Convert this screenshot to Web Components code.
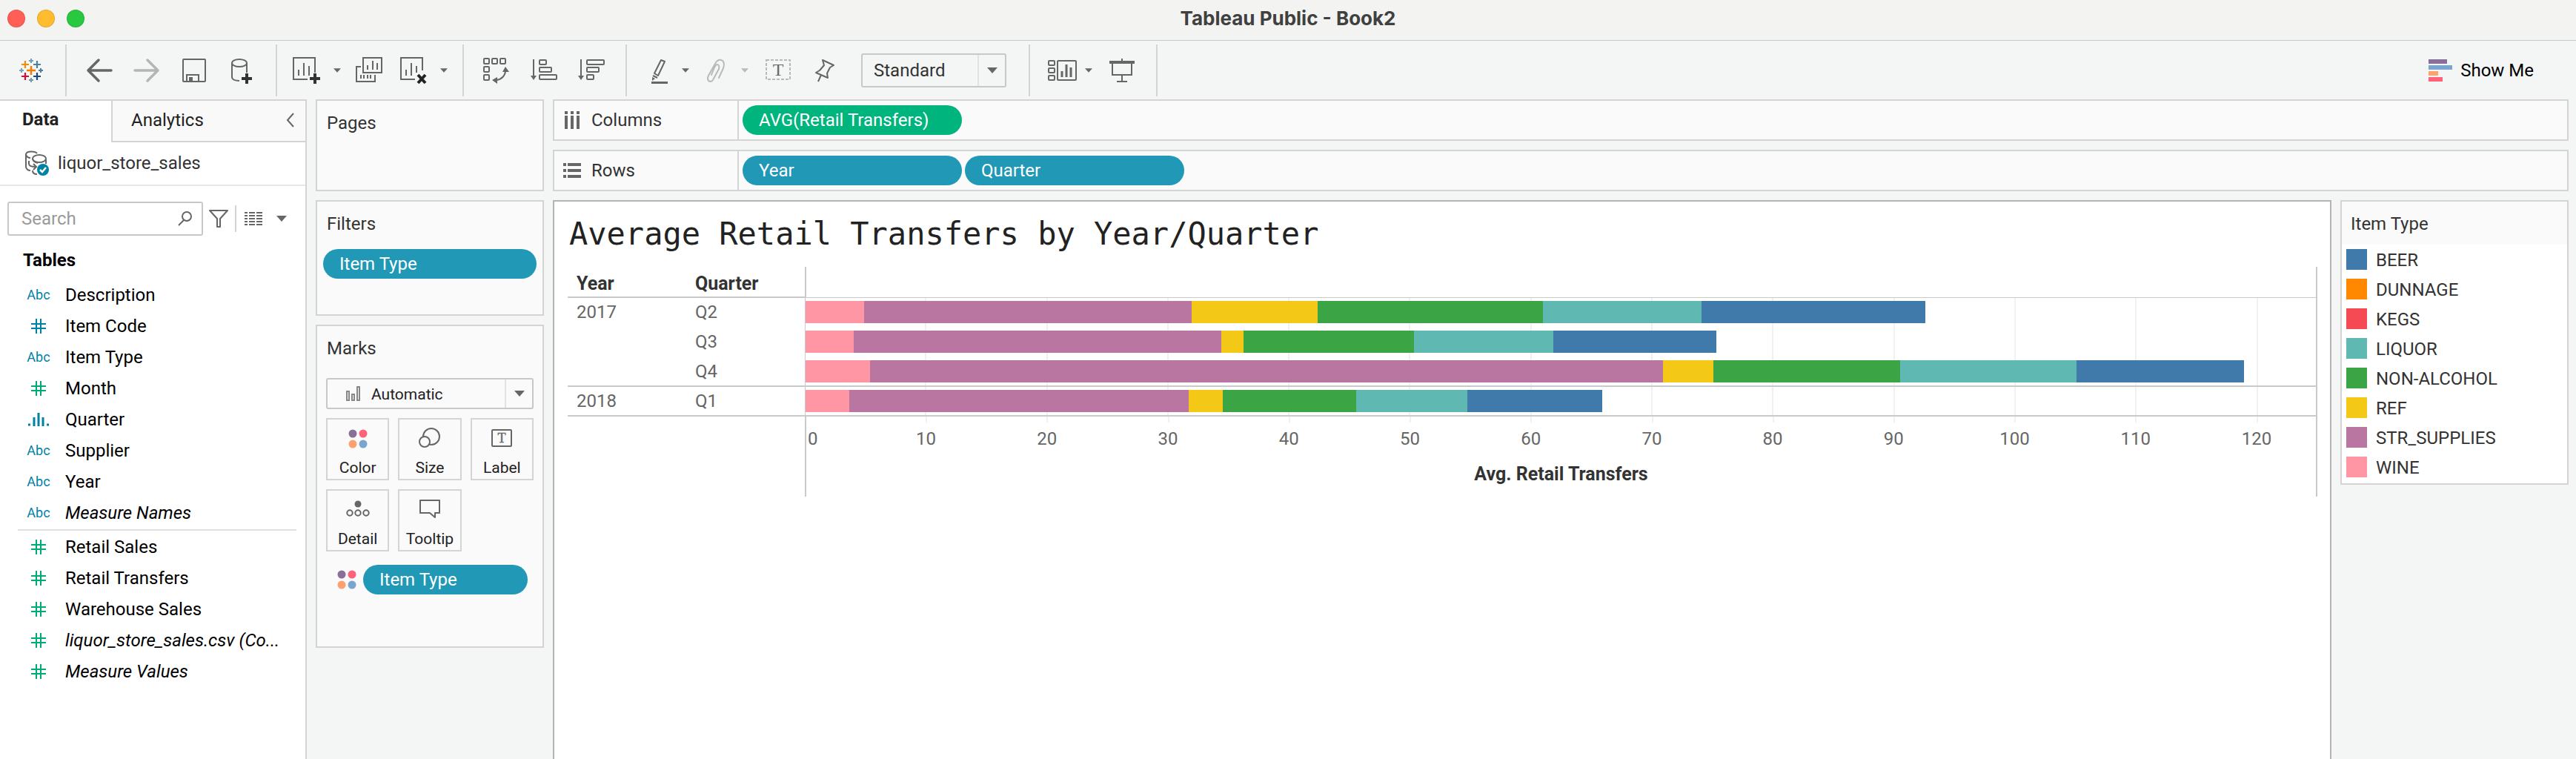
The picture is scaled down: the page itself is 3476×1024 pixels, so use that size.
<!DOCTYPE html>
<html lang="en">
<head>
<meta charset="utf-8">
<title>Tableau Public - Book2</title>
<style>
  html, body { height: 100%; }
  body { margin: 0; background: #f4f5f5; color: #333; font: 24px/40px Roboto, "Liberation Sans", sans-serif; }
</style>
</head>
<body>
<book-window>
  <title-bar slot="title">Tableau Public - Book2</title-bar>
  <tool-bar slot="toolbar"></tool-bar>
  <data-pane slot="data"></data-pane>

  <shelf-card slot="cards" heading="Pages" style="--min: 124px"></shelf-card>
  <shelf-card slot="cards" heading="Filters" style="--min: 156px">
    <field-pill style="margin: 13px 8px 0">Item Type</field-pill>
  </shelf-card>
  <shelf-card slot="cards" heading="Marks" style="--min: 436px">
    <marks-editor><field-pill>Item Type</field-pill></marks-editor>
  </shelf-card>

  <view-shelf slot="shelves" heading="Columns" icon="columns">
    <field-pill tone="green">AVG(Retail Transfers)</field-pill>
  </view-shelf>
  <view-shelf slot="shelves" heading="Rows" icon="rows">
    <field-pill>Year</field-pill>
    <field-pill>Quarter</field-pill>
  </view-shelf>

  <bar-view slot="view" heading="Average Retail Transfers by Year/Quarter"></bar-view>
  <color-legend slot="legend" heading="Item Type"></color-legend>
</book-window>

<script>
const BASE = `:host, *, *::before, *::after { box-sizing: border-box; }
  button, select, input { font: inherit; color: inherit; background: none; border: 0; margin: 0; padding: 0; border-radius: 0; }
  svg { display: block; fill: none; stroke: #666; stroke-width: 2; flex: none; }
  h1, h2 { margin: 0; font-size: inherit; font-weight: 400; }
  ul { list-style: none; margin: 0; padding: 0; }`;

const define = (name, css, html) => customElements.define(name, class extends HTMLElement {
  connectedCallback() {
    if (this.shadowRoot) return;
    this.attachShadow({ mode: "open" }).innerHTML =
      `<style>${BASE}${css}</style>${typeof html === "function" ? html(this) : html}`;
  }
});

const plus = (x, y, r, c, w) => `<path stroke="${c}" stroke-width="${w}" d="M${x - r} ${y}h${2 * r}M${x} ${y - r}v${2 * r}"/>`;
const caret = (w, c = "#666") => `<svg width="${w}" height="${w / 2 + 1}" viewBox="0 0 14 8" style="fill:${c};stroke:none"><path d="M0 0h14l-7 8z"/></svg>`;
const dots = `<svg width="26" height="26" viewBox="0 0 26 26" style="stroke:none"><circle cx="6" cy="6" r="5.500" fill="#8a6f98"/><circle cx="20" cy="6" r="5.500" fill="#ff637b"/><circle cx="6" cy="20" r="5.500" fill="#ffa06f"/><circle cx="20" cy="20" r="5.500" fill="#7aa5cf"/></svg>`;

const ICONS = {
  logo: plus(20, 20, 6, "#f57c00", 2.4) + plus(12, 12, 5, "#ee8d0a", 2.2) + plus(28, 12, 5, "#4f7f9c", 2.2)
      + plus(12, 28, 5, "#d0103a", 2.2) + plus(28, 28, 5, "#1b4a87", 2.2) + plus(20, 7, 3, "#6ba3b8", 2)
      + plus(7, 20, 3, "#7f9fb8", 2) + plus(33, 20, 3, "#4f7f9c", 2) + plus(20, 33, 3, "#7199ae", 2),
  back: `<path stroke-width="3.500" stroke-linecap="round" stroke-linejoin="round" d="M19 6L5 20L19 34M5 20H36"/>`,
  forward: `<path stroke="#b5b5b5" stroke-width="3.500" stroke-linecap="round" stroke-linejoin="round" d="M21 6L35 20L21 34M35 20H4"/>`,
  save: `<rect x="5" y="5" width="30" height="30" rx="1"/><path d="M10 35V26H26V35"/><path fill="#666" stroke="none" d="M13 29h5v6h-5z"/>`,
  datasource: `<ellipse cx="17" cy="10" rx="10" ry="5"/><path d="M7 10V29C7 32 11 34 17 34M27 10V23"/>` + plus(27, 31, 7, "#333", 4),
  sheet: `<path d="M31 23V3H2V32H21M9 19V27M16 10V27M23 14V27"/>` + plus(31, 31, 7, "#333", 4),
  duplicate: `<path d="M12 3H37V23H12ZM18 13V19M25 7V19M31 10V19M9 15H3V35H28V26M9 26V31M13 26V31M18 26V31M22 26V31"/>`,
  clear: `<path d="M32 20V3H3V32H22M10 19V27M17 10V27M24 14V23"/><path stroke="#222" stroke-width="4" d="M26 26L36 37M36 26L26 37"/>`,
  swap: `<g><rect x="3" y="4" width="7" height="7" rx="1"/><rect x="14" y="4" width="7" height="7" rx="1"/><rect x="25" y="4" width="7" height="7" rx="1"/><rect x="3" y="15" width="7" height="7" rx="1"/><rect x="3" y="26" width="7" height="7" rx="1"/></g><path d="M32 20C32 27 27 32 20 33"/><path fill="#666" stroke="none" d="M28 22h9l-5-7zM21 29v9l-7-5z"/>`,
  ascending: `<path d="M6 5V30"/><path fill="#666" stroke="none" d="M2 27h8l-4 6z"/><rect x="14" y="6" width="9" height="6" rx="1"/><rect x="14" y="16" width="16" height="6" rx="1"/><rect x="14" y="26" width="23" height="6" rx="1"/>`,
  descending: `<path d="M6 5V30"/><path fill="#666" stroke="none" d="M2 27h8l-4 6z"/><rect x="14" y="6" width="23" height="6" rx="1"/><rect x="14" y="16" width="16" height="6" rx="1"/><rect x="14" y="26" width="9" height="6" rx="1"/>`,
  highlight: `<path stroke-linejoin="round" d="M22 6L27 8L18 27L13 24ZM11 27L17 30"/><path fill="#666" stroke="none" d="M10 29L14 31L10 34zM9 35h22v3H9z"/>`,
  clip: `<path stroke="#b9b9b9" stroke-linecap="round" d="M24 30L30 17C32 12 31 7 27 6C23 5 21 7 19 11L10 27C8 31 9 34 12 35C15 35 16 34 17 31L24 18C25 15 24 12 22 12C20 12 19 14 18 16L14 26"/>`,
  label: `<rect x="4" y="6" width="32" height="26" stroke="#b9b9b9" stroke-dasharray="4 2"/><text x="20" y="27" text-anchor="middle" font-family="Liberation Serif, serif" font-size="24" fill="#666" stroke="none">T</text>`,
  pin: `<path stroke-linejoin="round" d="M16 6L31 13L26 16L22 24L23 30L7 23L12 20L18 13ZM14 26L10 35"/>`,
  cards: `<rect x="1" y="7" width="8" height="6" rx="1"/><rect x="1" y="17" width="8" height="6" rx="1"/><rect x="1" y="27" width="8" height="6" rx="1"/><rect x="13" y="7" width="25" height="26" rx="1"/><path stroke-width="3" d="M19 21V29M25 12V29M31 16V29"/>`,
  present: `<path stroke-width="4" d="M3 9H37"/><path d="M20 4V8M7 10V26H33V10M20 26V34M13 35H27"/>`
};
const icon = name => `<svg width="40" height="40" viewBox="0 0 40 40">${ICONS[name]}</svg>`;

define("book-window", `
  :host { display: flex; flex-direction: column; height: 100%; min-height: 100vh; overflow: hidden; }
  main { flex: 1; display: grid; grid-template-columns: 414px 308px 1fr; gap: 12px; padding-right: 10px; min-height: 0; }
  .stack { display: flex; flex-direction: column; gap: 12px; min-width: 0; }
  .work { flex: 1; display: grid; grid-template-columns: 1fr 308px; gap: 12px; align-items: start; }
  ::slotted([slot=view]) { height: 100%; }
  ::slotted([slot=data]) { min-height: 0; }
`, `<slot name="title"></slot><slot name="toolbar"></slot>
  <main><slot name="data"></slot><div class="stack"><slot name="cards"></slot></div>
  <div class="stack"><slot name="shelves"></slot><div class="work"><slot name="view"></slot><slot name="legend"></slot></div></div></main>`);

define("title-bar", `
  :host { display: grid; grid-template-columns: 1fr auto 1fr; align-items: center; height: 55px; padding: 0 10px 4px; background: #f3f3f1; border-bottom: 1px solid #c9c9c9; }
  .lights { display: flex; gap: 16px; }
  button { width: 24px; height: 24px; border-radius: 50%; border: 1px solid rgba(0,0,0,.1); }
  h1 { font: 700 26px/40px Inter, sans-serif; color: #404040; }
`, `<div class="lights"><button aria-label="Close" style="background:#ff5f57"></button><button aria-label="Minimize" style="background:#febc2e"></button><button aria-label="Zoom" style="background:#28c840"></button></div><h1><slot></slot></h1>`);

const tool = (name, label, gap = 24) => `<button aria-label="${label}" class="g${gap}">${icon(name)}</button>`;
const menu = (label, gap, c) => `<button aria-label="${label}" class="menu g${gap}">${caret(10, c)}</button>`;
define("tool-bar", `
  :host { display: flex; align-items: center; height: 79px; }
  .group { display: flex; align-items: center; height: 70px; border-right: 2px solid #d4d4d4; padding-right: 26px; }
  .brand { padding: 0 26px 0 22px; }
  .tight { padding-right: 14px; }
  .menu { width: 22px; height: 40px; display: grid; place-items: center; }
  .g4 { margin-left: 4px; } .g8 { margin-left: 8px; } .g10 { margin-left: 10px; } .g12 { margin-left: 12px; } .g14 { margin-left: 14px; }
  .g20 { margin-left: 20px; } .g24 { margin-left: 24px; }
  .select { display: grid; grid-template-columns: 155px 37px; height: 46px; align-items: center; border: 2px solid #c8c8c8; border-radius: 3px; margin: 0 4px 0 28px; width: 196px; }
  .select select { grid-area: 1/1/2/3; height: 42px; padding-left: 15px; appearance: none; width: 100%; }
  .select span { grid-area: 1/2; height: 42px; display: grid; place-items: center; border-left: 2px solid #e2e2e2; pointer-events: none; }
  .show { margin-left: auto; margin-right: 57px; display: flex; align-items: center; gap: 11px; color: #000; }
`, `
  <div class="group brand">${icon("logo")}</div>
  <div class="group">${tool("back", "Undo")}${tool("forward", "Redo")}${tool("save", "Save")}${tool("datasource", "New data source")}</div>
  <div class="group tight">${tool("sheet", "New worksheet", 20)}${menu("New worksheet menu", 10)}${tool("duplicate", "Duplicate", 12)}${tool("clear", "Clear sheet", 20)}${menu("Clear menu", 10)}</div>
  <div class="group">${tool("swap", "Swap rows and columns")}${tool("ascending", "Sort ascending")}${tool("descending", "Sort descending")}</div>
  <div class="group">${tool("highlight", "Highlight")}${menu("Highlight menu", 4)}${tool("clip", "Group members", 10)}${menu("Group menu", 8, "#b9b9b9")}${tool("label", "Show mark labels", 14)}${tool("pin", "Fix axes")}
    <div class="select"><select aria-label="Fit"><option>Standard</option></select><span>${caret(14)}</span></div></div>
  <div class="group">${tool("cards", "Show or hide cards")}${menu("Cards menu", 4)}${tool("present", "Presentation mode", 14)}</div>
  <button class="show"><svg width="32" height="30" viewBox="0 0 32 30" style="stroke:none"><path fill="#8a6f98" d="M0 0h25v6H0z"/><path fill="#7aa5cf" d="M0 8h32v6H0z"/><path fill="#ffa06f" d="M0 16h13v6H0z"/><path fill="#ff637b" d="M0 24h19v6H0z"/></svg>Show Me</button>`);

const FIELDS = {
  dimensions: [["abc", "Description"], ["num", "Item Code"], ["abc", "Item Type"], ["num measure", "Month"], ["bin", "Quarter"], ["abc", "Supplier"], ["abc", "Year"], ["abc", "Measure Names", 1]],
  measures: [["num measure", "Retail Sales"], ["num measure", "Retail Transfers"], ["num measure", "Warehouse Sales"], ["num measure", "liquor_store_sales.csv (Co...", 1], ["num measure", "Measure Values", 1]]
};
const fieldIcon = kind => kind === "abc" ? "Abc"
  : kind === "bin" ? `<svg width="28" height="20" viewBox="0 0 28 20"><path stroke="#0081a6" stroke-width="3" d="M0 17h3M25 17h3M8 7V19M14 1V19M20 7V19"/></svg>`
  : `<svg width="20" height="20" viewBox="0 0 20 20" style="stroke:${kind.includes("measure") ? "#00ab78" : "#0081a6"}"><path d="M7 0V20M13 0V20M0 7H20M0 13H20"/></svg>`;
const fieldList = list => `<ul>${list.map(([k, t, i]) => `<li><span class="type">${fieldIcon(k)}</span><span${i ? ' class="italic"' : ""}>${t}</span></li>`).join("")}</ul>`;

define("data-pane", `
  :host { display: block; background: #fff; border-top: 2px solid #d4d4d4; border-right: 2px solid #d4d4d4; color: #000; }
  .tabs { display: grid; grid-template-columns: 150px 1fr; height: 56px; line-height: 50px; color: #222; }
  .tabs button { text-align: left; }
  .data { font-weight: 700; padding: 0 0 6px 30px; }
  .other { display: flex; align-items: center; background: #f9f9f9; border: solid #d4d4d4; border-width: 0 0 2px 2px; padding: 0 14px 2px 25px; justify-content: space-between; }
  .source { display: flex; align-items: center; gap: 12px; height: 59px; padding: 0 0 2px 32px; border-bottom: 2px solid #e6e6e6; color: #333; }
  .find { display: flex; align-items: center; margin: 21px 0 14px 10px; height: 46px; }
  .search { display: flex; align-items: center; width: 264px; height: 46px; border: 2px solid #c8c8c8; border-radius: 3px; padding: 0 12px 0 17px; margin-right: 8px; }
  .search input { flex: 1; min-width: 0; outline: 0; }
  .search input::placeholder { color: #9a9a9a; opacity: 1; }
  .list { border-left: 2px solid #d4d4d4; height: 36px; padding-left: 11px; margin-left: 9px; display: flex; align-items: center; }
  .more { margin-left: 19px; }
  h2 { font-weight: 700; line-height: 38px; padding-left: 31px; margin-bottom: 7px; }
  li { display: flex; align-items: center; height: 42px; white-space: nowrap; }
  .type { width: 32px; margin: 0 20px 0 36px; display: flex; justify-content: center; color: #0081a6; font-size: 18px; }
  .italic { font-style: italic; }
  hr { border: 0; height: 2px; background: #e0e0e0; margin: 1px 12px 1px 24px; }
`, `
  <div class="tabs"><button class="data">Data</button><button class="other">Analytics<svg width="12" height="20" viewBox="0 0 12 20"><path d="M10 1L2 10L10 19"/></svg></button></div>
  <div class="source"><svg width="34" height="34" viewBox="0 0 34 34"><path d="M18 4C16 1 4 0 3 5V22C3 25 6 27 9 27M3 5C3 8 6 10 9 10"/><ellipse cx="21" cy="11" rx="9" ry="5"/><path d="M12 11C12 14 15 16 19 17M30 12V18M7 14V18C7 21 10 22 16 22M13 18L17 22L13 26M12 27C12 30 14 32 18 32"/><circle cx="26" cy="26" r="8" fill="#0081a6" stroke="none"/><path stroke="#fff" stroke-width="2.500" d="M22 26L25 29L30 23"/></svg>liquor_store_sales</div>
  <div class="find">
    <label class="search"><input type="text" placeholder="Search" aria-label="Search"><svg width="20" height="20" viewBox="0 0 20 20"><circle cx="12" cy="7" r="6"/><path d="M8 12L1 19"/></svg></label>
    <button aria-label="Filter fields"><svg width="26" height="26" viewBox="0 0 26 26"><path stroke-linejoin="round" d="M1 2H25L15 13V24H11V13Z"/></svg></button>
    <div class="list"><button aria-label="View as list"><svg width="24" height="20" viewBox="0 0 24 20"><path d="M0 2H4M6 2H14M16 2H24M0 6H4M6 6H14M16 6H24M0 10H4M6 10H14M16 10H24M0 14H4M6 14H14M16 14H24M0 18H4M6 18H14M16 18H24"/></svg></button></div>
    <button class="more" aria-label="More options">${caret(14)}</button>
  </div>
  <h2>Tables</h2>${fieldList(FIELDS.dimensions)}<hr>${fieldList(FIELDS.measures)}`);

define("shelf-card", `
  :host { display: block; min-height: var(--min); border: 2px solid #d4d4d4; background: #fafafa; }
  h2 { padding: 9px 0 0 13px; line-height: 42px; }
`, el => `<h2>${el.getAttribute("heading")}</h2><slot></slot>`);

define("field-pill", `
  :host { display: block; height: 40px; border-radius: 20px; background: #2098b6; color: #fff; padding: 0 22px; white-space: nowrap; }
  :host([tone=green]) { background: #00b47d; }
`, `<slot></slot>`);

const markIcon = body => `<svg width="34" height="32" viewBox="0 0 34 32">${body}</svg>`;
define("marks-editor", `
  :host { display: block; margin: 19px 12px 0; font-size: 21px; color: #222; }
  .select { display: grid; grid-template-columns: 25px 1fr 37px; padding-left: 24px; height: 42px; align-items: center; border: 2px solid #c8c8c8; border-radius: 3px; }
  .select select { grid-area: 1/1/2/4; height: 38px; padding-left: 35px; appearance: none; width: 100%; }
  .select svg { pointer-events: none; }
  .kind { grid-area: 1/1; }
  .select span { grid-area: 1/3; height: 38px; display: grid; place-items: center; border-left: 2px solid #e2e2e2; pointer-events: none; }
  .grid { display: grid; grid-template-columns: repeat(3, 1fr); gap: 12px; margin: 12px 0 18px; }
  .grid button { height: 84px; border: 2px solid #d4d4d4; display: flex; flex-direction: column; align-items: center; padding-top: 10px; gap: 11px; line-height: 24px; }
  .row { display: flex; align-items: center; gap: 9px; padding: 0 8px 0 15px; font-size: 24px; }
  ::slotted(*) { flex: 1; }
`, `
  <div class="select"><svg class="kind" width="20" height="20" viewBox="0 0 20 20" style="stroke:#888"><rect x="2" y="7" width="3" height="12"/><rect x="9" y="11" width="3" height="8"/><rect x="16" y="1" width="3" height="18"/></svg>
    <select aria-label="Mark type"><option>Automatic</option></select><span>${caret(14)}</span></div>
  <div class="grid">
    <button><svg width="26" height="32" viewBox="0 -3 26 32">${dots.replace(/<\/?svg[^>]*>/g, "").replace(/<circle/g, '<circle stroke="none"')}</svg>Color</button>
    <button>${markIcon('<circle cx="19" cy="13" r="11"/><circle cx="10" cy="20" r="7" fill="#fafafa"/>')}Size</button>
    <button>${markIcon('<rect x="4" y="4" width="26" height="22" rx="1"/><text x="17" y="21" text-anchor="middle" font-family="Liberation Serif, serif" font-size="18" fill="#666" stroke="#666" stroke-width="0.400">T</text>')}Label</button>
    <button>${markIcon('<circle cx="17" cy="8" r="4.500" fill="#666" stroke="none"/><circle cx="6" cy="20" r="3.700"/><circle cx="17" cy="20" r="3.700"/><circle cx="28" cy="20" r="3.700"/>')}Detail</button>
    <button>${markIcon('<path stroke-linejoin="round" d="M4 3H30V20H24V26L17 20H4Z"/>')}Tooltip</button>
  </div>
  <div class="row">${dots}<slot></slot></div>`);

const SHELF_ICONS = {
  columns: `<path stroke-width="4" d="M4 0v4M12 0v4M20 0v4M4 6v18M12 6v18M20 6v18"/>`,
  rows: `<path stroke-width="4" d="M0 4h4M0 12h4M0 20h4M6 4h18M6 12h18M6 20h18"/>`
};
define("view-shelf", `
  :host { display: flex; height: 56px; border: 2px solid #d4d4d4; background: #fafafa; align-items: center; }
  h2 { display: flex; align-items: center; gap: 14px; width: 249px; height: 100%; padding-left: 12px; border-right: 2px solid #d4d4d4; }
  .pills { display: flex; gap: 4px; padding-left: 5px; }
  ::slotted(field-pill) { width: 296px; }
`, el => `<h2><svg width="24" height="24" viewBox="0 0 24 24">${SHELF_ICONS[el.getAttribute("icon")]}</svg>${el.getAttribute("heading")}</h2><div class="pills"><slot></slot></div>`);

const COLORS = { "BEER": "#3f7aaa", "DUNNAGE": "#ff8800", "KEGS": "#f54a54", "LIQUOR": "#5fb9b2", "NON-ALCOHOL": "#3ba444", "REF": "#f3c817", "STR_SUPPLIES": "#b876a1", "WINE": "#ff96a4" };
const STACK = ["WINE", "STR_SUPPLIES", "REF", "NON-ALCOHOL", "LIQUOR", "BEER"];
const DOMAIN = 124.8;
const ROWS = [
  { year: "2017", quarter: "Q2", values: [4.84, 27.08, 10.37, 18.62, 13.14, 18.48] },
  { quarter: "Q3", values: [3.98, 30.39, 1.82, 14.08, 11.52, 13.49] },
  { quarter: "Q4", values: [5.33, 65.52, 4.15, 15.45, 14.57, 13.84], last: true },
  { year: "2018", quarter: "Q1", values: [3.61, 28.04, 2.83, 11.02, 9.19, 11.16], last: true }
];
const pct = v => `${(v / DOMAIN * 100).toFixed(3)}%`;
const ticks = n => `<div class="ticks">${"<i></i>".repeat(n)}</div>`;
define("bar-view", `
  :host { display: block; background: #fff; border: 2px solid #b3b3b3; border-bottom: 0; padding: 0 17px 0 18px; }
  h1 { font: 42px/88px "DejaVu Sans Mono", monospace; color: #222; padding-left: 2px; white-space: nowrap; }
  table { width: 100%; border-collapse: separate; border-spacing: 0; table-layout: fixed; color: #666; }
  th, td { padding: 0; text-align: left; font-weight: 400; vertical-align: top; }
  .key { width: 160px; padding-left: 12px; }
  thead th { height: 42px; font-size: 25px; font-weight: 700; color: #333; border-bottom: 2px solid #cacaca; line-height: 34px; padding-top: 6px; }
  thead .plot { border-bottom-width: 1px; }
  tbody th, tbody td { height: 40px; line-height: 38px; }
  .last th, .last td { border-bottom: 2px solid #cacaca; }
  .plot { border-right: 2px solid #cacaca; border-left: 1px solid #cacaca; }
  thead .plot, tfoot .plot { border-left-width: 2px; }
  .cell { display: grid; height: 38px; }
  .ticks { grid-area: 1/1; display: flex; }
  .ticks i { flex: 0 0 ${pct(10)}; border-right: 2px solid #f1f1f1; }
  .bar { grid-area: 1/1; display: flex; padding: 4px 0; height: 38px; }
  tr:not(.last) .cell { height: 40px; }
  .axis .ticks { height: 8px; }
  .axis { height: 108px; }
  .labels { display: flex; line-height: 40px; padding-top: 2px; white-space: nowrap; }
  .labels span { flex: 0 0 ${pct(10)}; text-align: center; }
  .labels span:first-child { flex-basis: ${pct(4.9)}; text-align: left; padding-left: 2px; }
  .caption { text-align: center; font-size: 25px; font-weight: 700; color: #333; line-height: 56px; }
`, el => `<h1>${el.getAttribute("heading")}</h1>
  <table><thead><tr><th class="key">Year</th><th class="key">Quarter</th><th class="plot" aria-label="Avg. Retail Transfers"></th></tr></thead>
  <tbody>${ROWS.map(r => `<tr class="${r.last ? "last" : ""}"><th class="key">${r.year || ""}</th><th class="key">${r.quarter}</th><td class="plot"><div class="cell">${ticks(12)}<div class="bar">${r.values.map((v, i) => `<span style="width:${pct(v)};background:${COLORS[STACK[i]]}"></span>`).join("")}</div></div></td></tr>`).join("")}</tbody>
  <tfoot><tr><td colspan="2"></td><td class="plot"><div class="axis">${ticks(12)}<div class="labels">${Array.from({ length: 13 }, (_, i) => `<span>${i * 10}</span>`).join("")}</div><div class="caption">Avg. Retail Transfers</div></div></td></tr></tfoot></table>`);

define("color-legend", `
  :host { display: block; border: 2px solid #d4d4d4; background: #fff; padding-bottom: 2px; }
  h2 { height: 58px; line-height: 60px; padding-left: 12px; background: #fafafa; }
  li { display: flex; align-items: center; height: 40px; gap: 12px; padding-left: 6px; }
  i { width: 28px; height: 28px; }
  span { padding-top: 2px; }
`, el => `<h2>${el.getAttribute("heading")}</h2><ul>${Object.entries(COLORS).map(([n, c]) => `<li><i style="background:${c}"></i><span>${n}</span></li>`).join("")}</ul>`);
</script>
</body>
</html>
